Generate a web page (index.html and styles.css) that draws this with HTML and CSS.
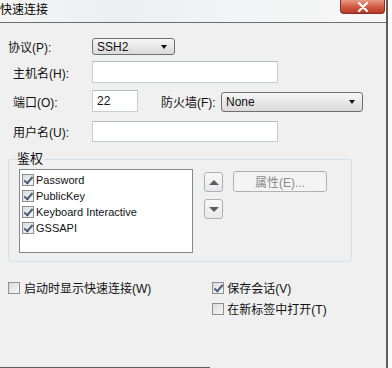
FILE: index.html
```html
<!DOCTYPE html>
<html lang="zh-CN">
<head>
    <meta charset="UTF-8">
    <meta name="viewport" content="width=device-width, initial-scale=1.0">
    <title>快速连接</title>
    <link rel="stylesheet" href="styles.css">
</head>
<body>
    <div class="window">
        <div class="titlebar">
            <span class="title">快速连接</span>
            <span class="close">
                <svg width="14" height="10" viewBox="0 0 14 10"><path d="M3 1 L11 9 M11 1 L3 9" stroke="#fff" stroke-width="2.2" stroke-linecap="round"/></svg>
            </span>
        </div>

        <div class="dialog">
            <div class="row row-protocol">
                <label class="lbl">协议(P):</label>
                <div class="select select-protocol"><span>SSH2</span><i class="caret"></i></div>
            </div>
            <div class="row row-host">
                <label class="lbl indent">主机名(H):</label>
                <div class="field field-wide"></div>
            </div>
            <div class="row row-port">
                <label class="lbl indent">端口(O):</label>
                <div class="field field-port">22</div>
                <label class="lbl-fw">防火墙(F):</label>
                <div class="select select-firewall"><span>None</span><i class="caret"></i></div>
            </div>
            <div class="row row-user">
                <label class="lbl indent">用户名(U):</label>
                <div class="field field-wide"></div>
            </div>

            <fieldset class="auth">
                <legend>鉴权</legend>
                <div class="auth-body">
                    <ul class="list">
                        <li><span class="check on"></span>Password</li>
                        <li><span class="check on"></span>PublicKey</li>
                        <li><span class="check on"></span>Keyboard Interactive</li>
                        <li><span class="check on"></span>GSSAPI</li>
                    </ul>
                    <div class="arrows">
                        <span class="arrow-btn"><i class="tri-up"></i></span>
                        <span class="arrow-btn"><i class="tri-down"></i></span>
                    </div>
                    <span class="props">属性(E)...</span>
                </div>
            </fieldset>

            <div class="options">
                <div class="opt-col">
                    <div class="opt"><span class="check"></span>启动时显示快速连接(W)</div>
                </div>
                <div class="opt-col opt-right">
                    <div class="opt"><span class="check on"></span>保存会话(V)</div>
                    <div class="opt"><span class="check"></span>在新标签中打开(T)</div>
                </div>
            </div>

            <div class="bottom-edge"></div>
        </div>
    </div>
</body>
</html>
```

FILE: styles.css
```css
html, body {
    margin: 0;
    padding: 0;
}

body {
    width: 392px;
    height: 368px;
    overflow: hidden;
    background: #fbfbfb;
    font-family: "Liberation Sans", "Noto Sans CJK SC", sans-serif;
    font-size: 12px;
    color: #111;
}

.window {
    width: 386px;
    height: 368px;
    border-right: 2px solid #5c5c5c;
    display: flex;
    flex-direction: column;
}

/* title bar */
.titlebar {
    height: 22px;
    border-bottom: 1px solid #6e6e6e;
    display: flex;
    align-items: flex-start;
    background: linear-gradient(90deg, #f6f6f6 0%, #eceef0 30%, #f3f4f5 60%, #f7f7f7 100%);
}

.title {
    margin: 2px 0 0 0;
    font-size: 12px;
    line-height: 16px;
    color: #000;
}

.close {
    margin-left: auto;
    margin-right: 1px;
    width: 43px;
    height: 13px;
    display: flex;
    align-items: center;
    justify-content: center;
    border: 1px solid #8a2e22;
    border-top: none;
    border-radius: 0 0 4px 4px;
    background: linear-gradient(#e69a85, #cf5a40 55%, #b8392a);
}

/* dialog body */
.dialog {
    flex: 1;
    background: #f0f0f0;
    display: flex;
    flex-direction: column;
}

.row {
    display: flex;
    align-items: center;
}

.lbl {
    width: 92px;
    box-sizing: border-box;
    padding-left: 8px;
    white-space: nowrap;
}

.lbl.indent {
    padding-left: 13px;
}

.row-protocol {
    margin-top: 15px;
    height: 17px;
}

.row-host {
    margin-top: 6px;
    height: 22px;
}

.row-port {
    margin-top: 7px;
    height: 22px;
}

.row-user {
    margin-top: 9px;
    height: 21px;
}

.field {
    height: 100%;
    box-sizing: border-box;
    background: #fff;
    border: 1px solid #c6ccd3;
    border-top-color: #b5bcc4;
    padding: 2px 4px;
    line-height: 16px;
}

.field-wide {
    width: 186px;
}

.field-port {
    width: 46px;
}

.lbl-fw {
    margin-left: 23px;
    width: 60px;
    white-space: nowrap;
}

.select {
    box-sizing: border-box;
    display: flex;
    align-items: center;
    padding: 0 4px;
    border: 1px solid #707070;
    border-radius: 3px;
    background: linear-gradient(#f7f7f7, #e8e8e8 50%, #dadada);
}

.select span {
    flex: 1;
}

.select-protocol {
    width: 83px;
    height: 17px;
}

.select-firewall {
    width: 142px;
    height: 20px;
    align-self: flex-end;
}

.caret {
    width: 0;
    height: 0;
    margin-right: 3px;
    border-left: 3.5px solid transparent;
    border-right: 3.5px solid transparent;
    border-top: 4px solid #111;
}

/* auth group */
.auth {
    margin: 9px 0 0 8px;
    padding: 0 0 8px;
    width: 344px;
    box-sizing: border-box;
    border: 1px solid #d5dfe5;
    border-radius: 3px;
    min-width: 0;
}

.auth legend {
    margin-left: 7px;
    padding: 0 1px;
    font-size: 13px;
    line-height: 16px;
}

.auth-body {
    display: flex;
    align-items: flex-start;
    padding-top: 2px;
}

.list {
    list-style: none;
    margin: 0 0 0 10px;
    padding: 2px 0 0 2px;
    width: 174px;
    height: 84px;
    box-sizing: border-box;
    background: #fff;
    border: 1px solid #828790;
    font-size: 11px;
}

.list li {
    display: flex;
    align-items: center;
    height: 16px;
}

.list .check {
    margin-right: 2px;
}

.check {
    width: 12px;
    height: 12px;
    box-sizing: border-box;
    border: 1px solid #8e8f8f;
    background: linear-gradient(135deg, #dcdcdc, #f6f6f6);
    flex-shrink: 0;
    position: relative;
}

.check.on::after {
    content: "";
    position: absolute;
    left: 3px;
    top: 0;
    width: 3px;
    height: 7px;
    border-right: 2px solid #4a5e80;
    border-bottom: 2px solid #4a5e80;
    transform: rotate(40deg);
}

.arrows {
    margin: 3px 0 0 11px;
    display: flex;
    flex-direction: column;
    gap: 7px;
}

.arrow-btn {
    width: 19px;
    height: 20px;
    box-sizing: border-box;
    border: 1px solid #acb0b5;
    border-radius: 3px;
    background: linear-gradient(#f8f8f8, #e9e9e9);
    display: flex;
    align-items: center;
    justify-content: center;
}

.tri-up {
    width: 0;
    height: 0;
    border-left: 5px solid transparent;
    border-right: 5px solid transparent;
    border-bottom: 5px solid #5d5d5d;
}

.tri-down {
    width: 0;
    height: 0;
    border-left: 5px solid transparent;
    border-right: 5px solid transparent;
    border-top: 5px solid #5d5d5d;
}

.props {
    margin: 2px 0 0 10px;
    width: 94px;
    height: 21px;
    box-sizing: border-box;
    border: 1px solid #adb2b5;
    border-radius: 3px;
    background: #f4f4f4;
    color: #8b8b8b;
    display: flex;
    align-items: center;
    justify-content: center;
}

/* options */
.options {
    margin-top: 15px;
    display: flex;
}

.opt-col {
    padding-left: 8px;
}

.opt-right {
    padding-left: 61px;
}

.opt {
    display: flex;
    align-items: center;
    height: 21px;
    white-space: nowrap;
}

.opt .check {
    margin-right: 4px;
}

.opt-right .opt .check {
    margin-right: 3px;
}

.bottom-edge {
    margin-top: auto;
    width: 210px;
    height: 1px;
    background: #5e5e5e;
}
```
